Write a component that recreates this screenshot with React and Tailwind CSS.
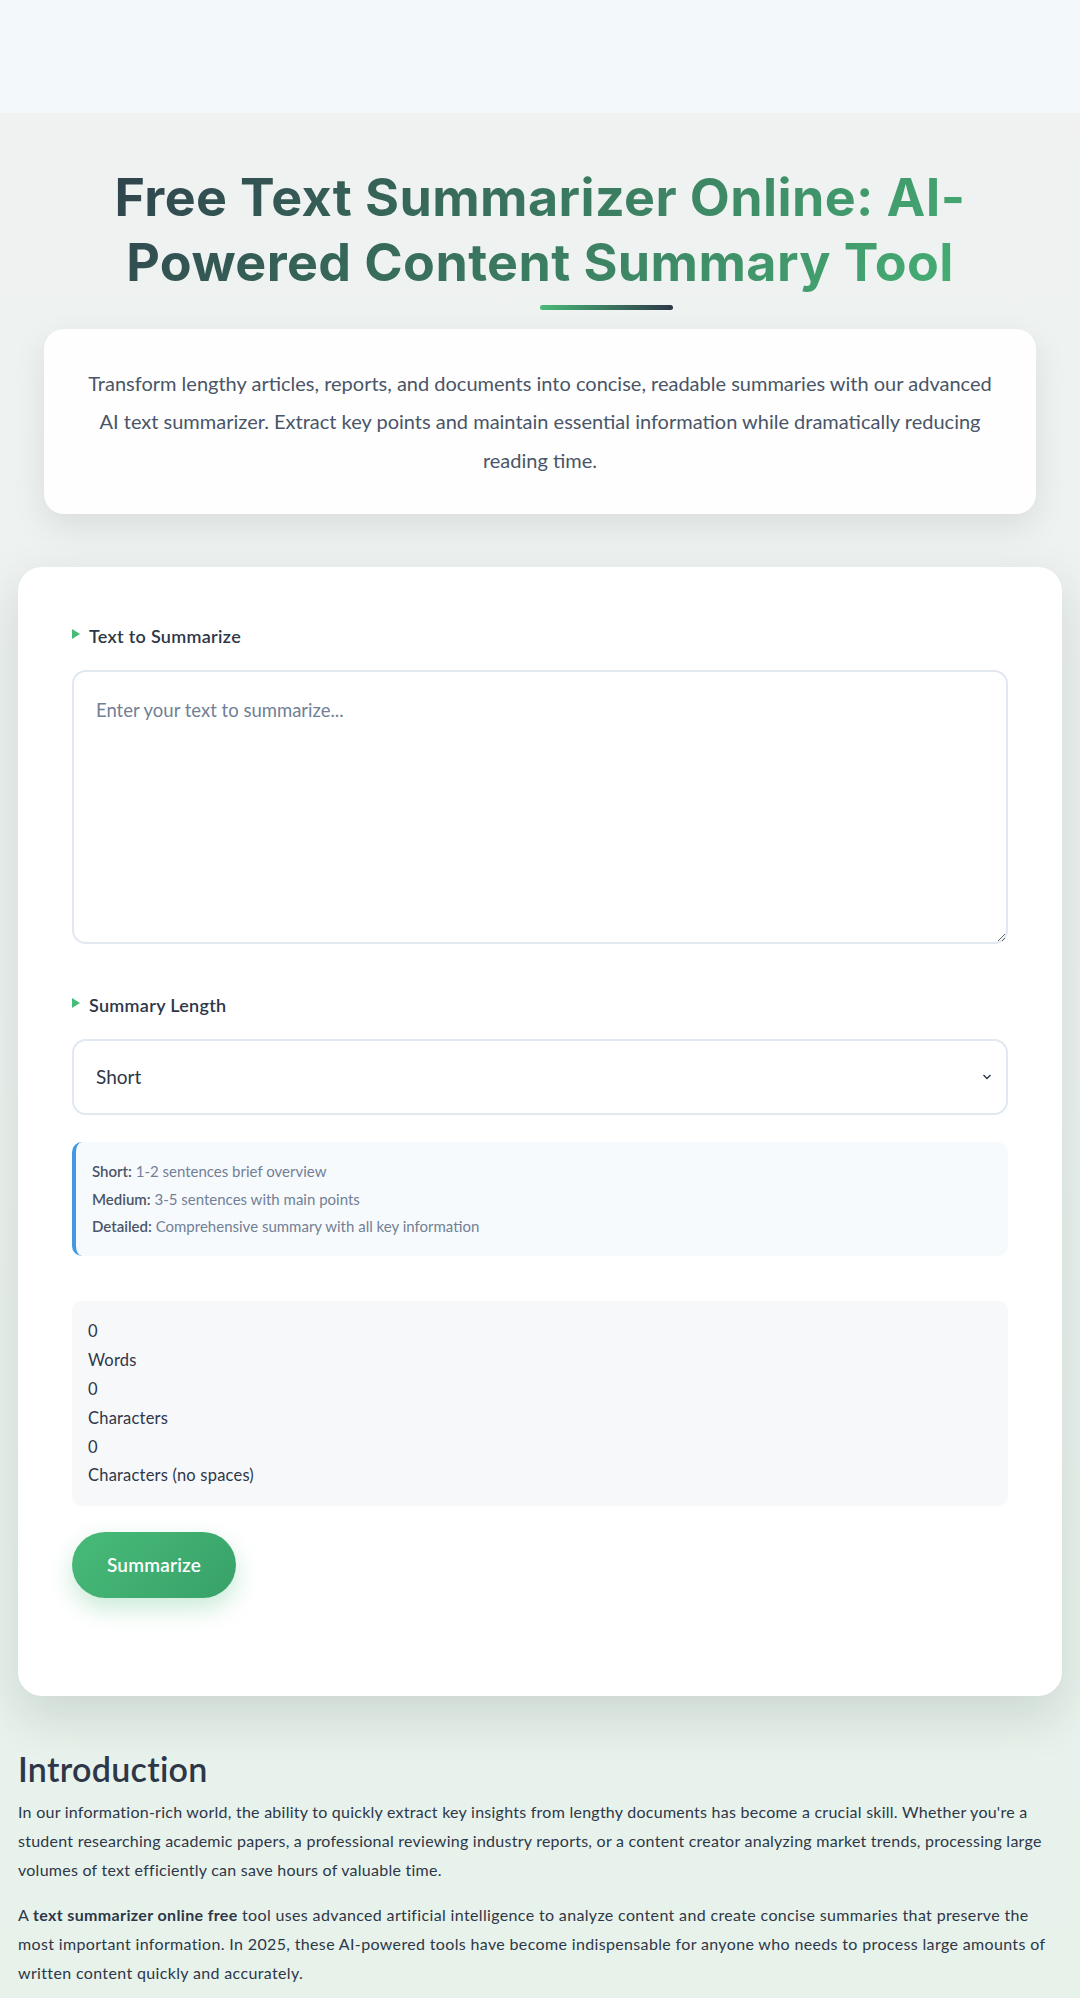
import React from "react";

function Tri() {
  return (
    <svg width="8" height="10" viewBox="0 0 8 10" className="mb-[6px] mr-[9px] shrink-0">
      <path d="M0 0 L8 5 L0 10 Z" fill="#48bb78" />
    </svg>
  );
}

export default function App() {
  return (
    <div className="min-h-screen font-['Lato','Noto_Sans',sans-serif] text-[#2d3748]">
      <div className="h-[113px] bg-[#f3f8fa]" />
      <div className="bg-[linear-gradient(180deg,#eff2f1_0%,#ecf2ef_50%,#e7f2eb_100%)] px-[18px] pt-[52px] pb-[20px]">
        <h1 className="text-center font-['Inter',sans-serif] font-bold text-[52px] leading-[65px] tracking-[0.4px] bg-[linear-gradient(135deg,#2d3748_0%,#48bb78_100%)] bg-clip-text text-transparent">
          Free Text Summarizer Online: AI-
          <br />
          Powered Content Summary Tool
        </h1>
        <div className="ml-[522px] mt-[10px] h-[5px] w-[133px] rounded-full bg-[linear-gradient(90deg,#48bb78,#2d3748)]" />
        <div className="mx-[26px] mt-[19px] rounded-[20px] bg-[#fdfefd] p-[35px] text-center text-[20px] leading-[38.4px] text-[#4a5568] shadow-[0_12px_34px_rgba(0,0,0,0.09)]">
          Transform lengthy articles, reports, and documents into concise, readable summaries with our advanced AI text summarizer. Extract key points and maintain essential information while dramatically reducing reading time.
        </div>

        <div className="mt-[53px] rounded-[24px] bg-white px-[54px] pt-[56px] pb-[98px] shadow-[0_20px_50px_rgba(20,50,35,0.14)]">
          <div className="mb-[20px] flex items-center text-[18px] font-semibold leading-[27px] tracking-[0.3px] text-[#2d3748]">
            <Tri />
            Text to Summarize
          </div>
          <textarea
            placeholder="Enter your text to summarize..."
            className="block h-[274px] w-full rounded-[14px] border-2 border-[#e2e8f0] bg-white px-[22px] py-[24px] text-[18.5px] leading-[28px] text-[#2d3748] placeholder:text-[#718096] outline-none"
          />

          <div className="mt-[48px] mb-[20px] flex items-center text-[18px] font-semibold leading-[27px] tracking-[0.3px] text-[#2d3748]">
            <Tri />
            Summary Length
          </div>
          <div className="relative">
            <select className="block h-[76px] w-full appearance-none rounded-[14px] border-2 border-[#e2e8f0] bg-white px-[22px] text-[19px] text-[#2d3748] outline-none">
              <option>Short</option>
              <option>Medium</option>
              <option>Detailed</option>
            </select>
            <svg
              width="10"
              height="8"
              viewBox="0 0 10 8"
              className="pointer-events-none absolute right-[16px] top-[34px]"
            >
              <path d="M1.5 2 L5 5.5 L8.5 2" fill="none" stroke="#2d3748" strokeWidth="1.4" />
            </svg>
          </div>

          <div className="mt-[27px] rounded-[10px] border-l-4 border-[#4299e1] bg-[#f7fafc] p-4 text-[15px] leading-[27.4px] text-[#718096]">
            <div>
              <span className="font-semibold text-[#4a5568]">Short:</span> 1-2 sentences brief overview
            </div>
            <div>
              <span className="font-semibold text-[#4a5568]">Medium:</span> 3-5 sentences with main points
            </div>
            <div>
              <span className="font-semibold text-[#4a5568]">Detailed:</span> Comprehensive summary with all key information
            </div>
          </div>

          <div className="mt-[45px] rounded-[10px] bg-[#f7f8fa] p-4 text-[16.5px] leading-[28.8px] tracking-[0.2px] text-[#2d3748]">
            <div>0</div>
            <div>Words</div>
            <div>0</div>
            <div>Characters</div>
            <div>0</div>
            <div>Characters (no spaces)</div>
          </div>

          <button className="mt-[26px] flex h-[66px] w-[164px] items-center justify-center rounded-full bg-[linear-gradient(135deg,#48bb78,#38a169)] text-[19px] font-semibold tracking-[0.2px] text-white shadow-[0_10px_25px_rgba(72,187,120,0.3)]">
            Summarize
          </button>
        </div>

        <h2 className="mt-[53px] mb-[10px] text-[34px] font-semibold leading-[39px] tracking-[0.3px] text-[#2d3748]">
          Introduction
        </h2>
        <p className="mb-[17px] text-[16px] leading-[28.7px] tracking-[0.25px] text-[#2d3748]">
          In our information-rich world, the ability to quickly extract key insights from lengthy documents has become a crucial skill. Whether you're a student researching academic papers, a professional reviewing industry reports, or a content creator analyzing market trends, processing large volumes of text efficiently can save hours of valuable time.
        </p>
        <p className="mb-[17px] text-[16px] leading-[28.7px] tracking-[0.35px] text-[#2d3748]">
          A <strong className="font-bold">text summarizer online free</strong> tool uses advanced artificial intelligence to analyze content and create concise summaries that preserve the most important information. In 2025, these AI-powered tools have become indispensable for anyone who needs to process large amounts of written content quickly and accurately.
        </p>
      </div>
    </div>
  );
}
